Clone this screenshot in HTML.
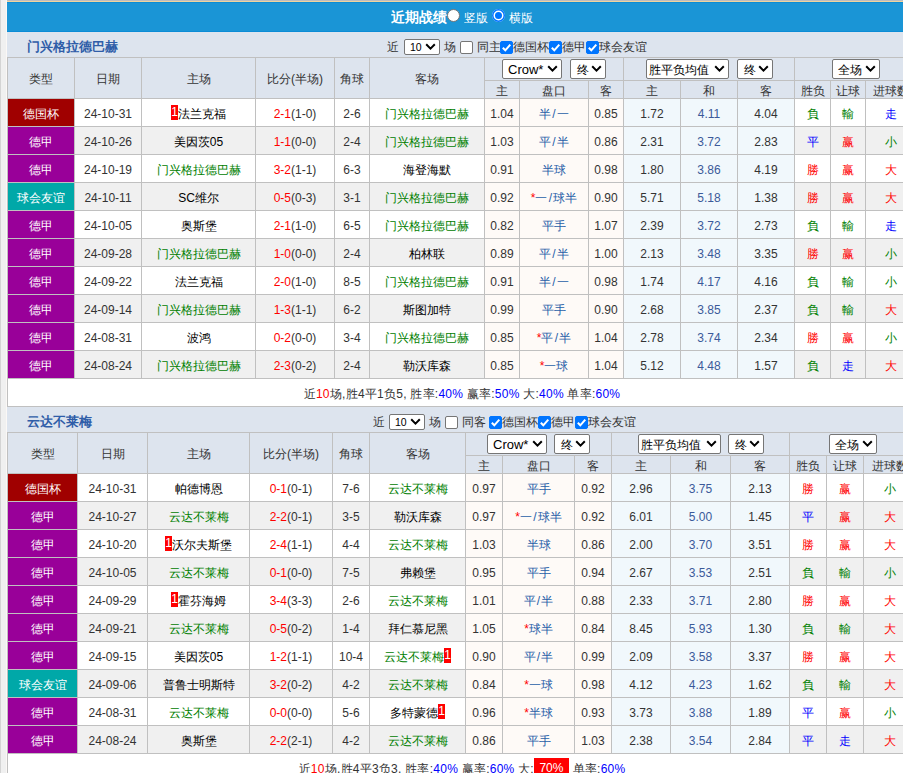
<!DOCTYPE html>
<html><head><meta charset="utf-8"><style>
html,body{margin:0;padding:0;}
body{width:903px;height:773px;overflow:hidden;position:relative;background:#f0f0f0;font-family:"Liberation Sans",sans-serif;font-size:12px;color:#333;font-weight:500;}
div{position:absolute;box-sizing:border-box;white-space:nowrap;overflow:hidden;}
.rc{background:#ff0000;color:#fff;font-weight:normal;display:inline-block;width:7px;height:15px;line-height:15px;vertical-align:-2px;text-align:center;overflow:hidden;}
.sel{background:#fff;border:1px solid #767676;border-radius:2px;color:#000;font-size:13px;padding-left:5px;}
.sel svg{position:absolute;right:3px;top:50%;margin-top:-4px;}
.s10{font-size:12px;padding-left:4px;}
.ctl{font-size:12px;color:#333;line-height:16px;overflow:visible;}
i{font-style:normal;margin:0 1.3px;}
.cb{width:13px;height:13px;border:1px solid #767676;border-radius:2px;background:#fff;}
.cb.on{background:#0075ff;border-color:#0075ff;}
.cb svg{position:absolute;left:-1px;top:-1px;}
</style></head><body>
<div style="left:0;top:0;width:1px;height:773px;background:#d4d4d4;"></div>
<div style="left:6px;top:0;width:1px;height:773px;background:#fbf8f6;"></div>
<div style="left:7px;top:0;width:900px;height:1px;background:#bcbcc0;"></div>
<div style="left:7px;top:1px;width:900px;height:1px;background:#efd49e;"></div>
<div style="left:7px;top:2px;width:930px;height:30px;background:#1a95d6;border-top:1px solid #0b8cd6;border-bottom:1px solid #0b8cd6;"></div>
<div style="left:391px;top:2px;width:60px;height:30px;line-height:30px;color:#fff;font-weight:bold;font-size:14px;">近期战绩</div>
<div class="rad" style="left:447px;top:9px;width:13px;height:13px;border-radius:50%;background:#fff;border:1px solid #767676;"></div>
<div style="left:464px;top:2px;width:30px;height:30px;line-height:32px;color:#fff;font-size:12px;">竖版</div>
<div class="rad" style="left:492px;top:9px;width:13px;height:13px;border-radius:50%;background:#0075ff;box-shadow:inset 0 0 0 1.5px #0075ff,inset 0 0 0 3px #fff;"></div>
<div style="left:509px;top:2px;width:30px;height:30px;line-height:32px;color:#fff;font-size:12px;">横版</div>
<div style="left:7px;top:32px;width:930px;height:25px;background:#dde4ee;"></div>
<div style="left:27px;top:32px;width:200px;height:25px;color:#2f5da8;font-weight:bold;font-size:13px;line-height:30px;">门兴格拉德巴赫</div>
<div class="ctl" style="left:387px;top:39px;">近</div>
<div class="sel" style="left:404px;top:39px;width:36px;height:16px;line-height:14px;font-size:10.5px;padding-left:5px;"><span>10</span><svg width="11" height="8" viewBox="0 0 11 8"><path d="M1.2 1.3 L5.5 5.6 L9.8 1.3" stroke="#000" stroke-width="2" fill="none"/></svg></div>
<div class="ctl" style="left:444px;top:39px;">场</div>
<div class="cb" style="left:460px;top:41px"></div>
<div class="ctl" style="left:477px;top:39px;">同主</div>
<div class="cb on" style="left:500px;top:41px"><svg width="13" height="13" viewBox="0 0 13 13"><path d="M2.8 6.8 L5.3 9.3 L10.3 3.6" stroke="#fff" stroke-width="2" fill="none"/></svg></div>
<div class="ctl" style="left:513px;top:39px;">德国杯</div>
<div class="cb on" style="left:549px;top:41px"><svg width="13" height="13" viewBox="0 0 13 13"><path d="M2.8 6.8 L5.3 9.3 L10.3 3.6" stroke="#fff" stroke-width="2" fill="none"/></svg></div>
<div class="ctl" style="left:562px;top:39px;">德甲</div>
<div class="cb on" style="left:586px;top:41px"><svg width="13" height="13" viewBox="0 0 13 13"><path d="M2.8 6.8 L5.3 9.3 L10.3 3.6" stroke="#fff" stroke-width="2" fill="none"/></svg></div>
<div class="ctl" style="left:599px;top:39px;">球会友谊</div>
<div style="left:8px;top:58px;width:66px;height:40px;background:#dde4ee;line-height:43px;text-align:center;color:#333;">类型</div>
<div style="left:75px;top:58px;width:66px;height:40px;background:#dde4ee;line-height:43px;text-align:center;color:#333;">日期</div>
<div style="left:142px;top:58px;width:113px;height:40px;background:#dde4ee;line-height:43px;text-align:center;color:#333;">主场</div>
<div style="left:256px;top:58px;width:78px;height:40px;background:#dde4ee;line-height:43px;text-align:center;color:#333;">比分(半场)</div>
<div style="left:335px;top:58px;width:34px;height:40px;background:#dde4ee;line-height:43px;text-align:center;color:#333;">角球</div>
<div style="left:370px;top:58px;width:114px;height:40px;background:#dde4ee;line-height:43px;text-align:center;color:#333;">客场</div>
<div style="left:485px;top:58px;width:138px;height:22px;background:#dde4ee;line-height:25px;"></div>
<div style="left:624px;top:58px;width:170px;height:22px;background:#dde4ee;line-height:25px;"></div>
<div style="left:795px;top:58px;width:120px;height:22px;background:#dde4ee;line-height:25px;"></div>
<div style="left:485px;top:81px;width:34px;height:17px;background:#dde4ee;line-height:20px;text-align:center;color:#333;">主</div>
<div style="left:520px;top:81px;width:68px;height:17px;background:#dde4ee;line-height:20px;text-align:center;color:#333;">盘口</div>
<div style="left:589px;top:81px;width:34px;height:17px;background:#dde4ee;line-height:20px;text-align:center;color:#333;">客</div>
<div style="left:624px;top:81px;width:56px;height:17px;background:#dde4ee;line-height:20px;text-align:center;color:#333;">主</div>
<div style="left:681px;top:81px;width:56px;height:17px;background:#dde4ee;line-height:20px;text-align:center;color:#333;">和</div>
<div style="left:738px;top:81px;width:56px;height:17px;background:#dde4ee;line-height:20px;text-align:center;color:#333;">客</div>
<div style="left:795px;top:81px;width:35px;height:17px;background:#dde4ee;line-height:20px;text-align:center;color:#333;">胜负</div>
<div style="left:831px;top:81px;width:34px;height:17px;background:#dde4ee;line-height:20px;text-align:center;color:#333;">让球</div>
<div style="left:866px;top:81px;width:49px;height:17px;background:#dde4ee;line-height:20px;text-align:center;color:#333;">进球数</div>
<div class="sel" style="left:502px;top:59px;width:60px;height:20px;line-height:20px;font-size:13px;padding-left:5px;"><span>Crow*</span><svg width="11" height="8" viewBox="0 0 11 8"><path d="M1.2 1.3 L5.5 5.6 L9.8 1.3" stroke="#000" stroke-width="2" fill="none"/></svg></div>
<div class="sel" style="left:570px;top:59px;width:36px;height:20px;line-height:20px;font-size:12px;padding-left:6px;"><span>终</span><svg width="11" height="8" viewBox="0 0 11 8"><path d="M1.2 1.3 L5.5 5.6 L9.8 1.3" stroke="#000" stroke-width="2" fill="none"/></svg></div>
<div class="sel" style="left:646px;top:59px;width:83px;height:20px;line-height:20px;font-size:12px;padding-left:2px;"><span>胜平负均值</span><svg width="11" height="8" viewBox="0 0 11 8"><path d="M1.2 1.3 L5.5 5.6 L9.8 1.3" stroke="#000" stroke-width="2" fill="none"/></svg></div>
<div class="sel" style="left:737px;top:59px;width:36px;height:20px;line-height:20px;font-size:12px;padding-left:6px;"><span>终</span><svg width="11" height="8" viewBox="0 0 11 8"><path d="M1.2 1.3 L5.5 5.6 L9.8 1.3" stroke="#000" stroke-width="2" fill="none"/></svg></div>
<div class="sel" style="left:832px;top:59px;width:48px;height:20px;line-height:20px;font-size:12px;padding-left:5px;"><span>全场</span><svg width="11" height="8" viewBox="0 0 11 8"><path d="M1.2 1.3 L5.5 5.6 L9.8 1.3" stroke="#000" stroke-width="2" fill="none"/></svg></div>
<div style="left:8px;top:99px;width:66px;height:27px;background:#a00000;line-height:30px;color:#fff;text-align:center;">德国杯</div>
<div style="left:75px;top:99px;width:66px;height:27px;background:#ffffff;line-height:30px;text-align:center;color:#333;">24-10-31</div>
<div style="left:142px;top:99px;width:113px;height:27px;background:#ffffff;line-height:30px;text-align:center;"><b class="rc">1</b><span style="color:#000">法兰克福</span></div>
<div style="left:256px;top:99px;width:78px;height:27px;background:#ffffff;line-height:30px;text-align:center;color:#333;"><span style="color:#ff0000">2-1</span>(1-0)</div>
<div style="left:335px;top:99px;width:34px;height:27px;background:#ffffff;line-height:30px;text-align:center;color:#333;">2-6</div>
<div style="left:370px;top:99px;width:114px;height:27px;background:#ffffff;line-height:30px;text-align:center;"><span style="color:#008000">门兴格拉德巴赫</span></div>
<div style="left:485px;top:99px;width:34px;height:27px;background:#fefaf7;line-height:30px;text-align:center;color:#333;">1.04</div>
<div style="left:520px;top:99px;width:68px;height:27px;background:#fefaf7;line-height:30px;text-align:center;color:#2860a8;">半<i>/</i>一</div>
<div style="left:589px;top:99px;width:34px;height:27px;background:#fefaf7;line-height:30px;text-align:center;color:#333;">0.85</div>
<div style="left:624px;top:99px;width:56px;height:27px;background:#f1f8fc;line-height:30px;text-align:center;color:#333;">1.72</div>
<div style="left:681px;top:99px;width:56px;height:27px;background:#f1f8fc;line-height:30px;text-align:center;color:#3b5a9a;">4.11</div>
<div style="left:738px;top:99px;width:56px;height:27px;background:#f1f8fc;line-height:30px;text-align:center;color:#333;">4.04</div>
<div style="left:795px;top:99px;width:35px;height:27px;background:#ffffff;line-height:30px;text-align:center;color:#008000;">負</div>
<div style="left:831px;top:99px;width:34px;height:27px;background:#ffffff;line-height:30px;text-align:center;color:#008000;">輸</div>
<div style="left:866px;top:99px;width:49px;height:27px;background:#ffffff;line-height:30px;text-align:center;color:#0000ff;">走</div>
<div style="left:8px;top:127px;width:66px;height:27px;background:#990099;line-height:30px;color:#fff;text-align:center;">德甲</div>
<div style="left:75px;top:127px;width:66px;height:27px;background:#f0f0f0;line-height:30px;text-align:center;color:#333;">24-10-26</div>
<div style="left:142px;top:127px;width:113px;height:27px;background:#f0f0f0;line-height:30px;text-align:center;"><span style="color:#000">美因茨05</span></div>
<div style="left:256px;top:127px;width:78px;height:27px;background:#f0f0f0;line-height:30px;text-align:center;color:#333;"><span style="color:#ff0000">1-1</span>(0-0)</div>
<div style="left:335px;top:127px;width:34px;height:27px;background:#f0f0f0;line-height:30px;text-align:center;color:#333;">2-4</div>
<div style="left:370px;top:127px;width:114px;height:27px;background:#f0f0f0;line-height:30px;text-align:center;"><span style="color:#008000">门兴格拉德巴赫</span></div>
<div style="left:485px;top:127px;width:34px;height:27px;background:#fefaf7;line-height:30px;text-align:center;color:#333;">1.03</div>
<div style="left:520px;top:127px;width:68px;height:27px;background:#fefaf7;line-height:30px;text-align:center;color:#2860a8;">平<i>/</i>半</div>
<div style="left:589px;top:127px;width:34px;height:27px;background:#fefaf7;line-height:30px;text-align:center;color:#333;">0.86</div>
<div style="left:624px;top:127px;width:56px;height:27px;background:#f1f8fc;line-height:30px;text-align:center;color:#333;">2.31</div>
<div style="left:681px;top:127px;width:56px;height:27px;background:#f1f8fc;line-height:30px;text-align:center;color:#3b5a9a;">3.72</div>
<div style="left:738px;top:127px;width:56px;height:27px;background:#f1f8fc;line-height:30px;text-align:center;color:#333;">2.83</div>
<div style="left:795px;top:127px;width:35px;height:27px;background:#f0f0f0;line-height:30px;text-align:center;color:#0000ff;">平</div>
<div style="left:831px;top:127px;width:34px;height:27px;background:#f0f0f0;line-height:30px;text-align:center;color:#ff0000;">赢</div>
<div style="left:866px;top:127px;width:49px;height:27px;background:#f0f0f0;line-height:30px;text-align:center;color:#008000;">小</div>
<div style="left:8px;top:155px;width:66px;height:27px;background:#990099;line-height:30px;color:#fff;text-align:center;">德甲</div>
<div style="left:75px;top:155px;width:66px;height:27px;background:#ffffff;line-height:30px;text-align:center;color:#333;">24-10-19</div>
<div style="left:142px;top:155px;width:113px;height:27px;background:#ffffff;line-height:30px;text-align:center;"><span style="color:#008000">门兴格拉德巴赫</span></div>
<div style="left:256px;top:155px;width:78px;height:27px;background:#ffffff;line-height:30px;text-align:center;color:#333;"><span style="color:#ff0000">3-2</span>(1-1)</div>
<div style="left:335px;top:155px;width:34px;height:27px;background:#ffffff;line-height:30px;text-align:center;color:#333;">6-3</div>
<div style="left:370px;top:155px;width:114px;height:27px;background:#ffffff;line-height:30px;text-align:center;"><span style="color:#000">海登海默</span></div>
<div style="left:485px;top:155px;width:34px;height:27px;background:#fefaf7;line-height:30px;text-align:center;color:#333;">0.91</div>
<div style="left:520px;top:155px;width:68px;height:27px;background:#fefaf7;line-height:30px;text-align:center;color:#2860a8;">半球</div>
<div style="left:589px;top:155px;width:34px;height:27px;background:#fefaf7;line-height:30px;text-align:center;color:#333;">0.98</div>
<div style="left:624px;top:155px;width:56px;height:27px;background:#f1f8fc;line-height:30px;text-align:center;color:#333;">1.80</div>
<div style="left:681px;top:155px;width:56px;height:27px;background:#f1f8fc;line-height:30px;text-align:center;color:#3b5a9a;">3.86</div>
<div style="left:738px;top:155px;width:56px;height:27px;background:#f1f8fc;line-height:30px;text-align:center;color:#333;">4.19</div>
<div style="left:795px;top:155px;width:35px;height:27px;background:#ffffff;line-height:30px;text-align:center;color:#ff0000;">勝</div>
<div style="left:831px;top:155px;width:34px;height:27px;background:#ffffff;line-height:30px;text-align:center;color:#ff0000;">赢</div>
<div style="left:866px;top:155px;width:49px;height:27px;background:#ffffff;line-height:30px;text-align:center;color:#ff0000;">大</div>
<div style="left:8px;top:183px;width:66px;height:27px;background:#00a8a8;line-height:30px;color:#fff;text-align:center;">球会友谊</div>
<div style="left:75px;top:183px;width:66px;height:27px;background:#f0f0f0;line-height:30px;text-align:center;color:#333;">24-10-11</div>
<div style="left:142px;top:183px;width:113px;height:27px;background:#f0f0f0;line-height:30px;text-align:center;"><span style="color:#000">SC维尔</span></div>
<div style="left:256px;top:183px;width:78px;height:27px;background:#f0f0f0;line-height:30px;text-align:center;color:#333;"><span style="color:#ff0000">0-5</span>(0-3)</div>
<div style="left:335px;top:183px;width:34px;height:27px;background:#f0f0f0;line-height:30px;text-align:center;color:#333;">3-1</div>
<div style="left:370px;top:183px;width:114px;height:27px;background:#f0f0f0;line-height:30px;text-align:center;"><span style="color:#008000">门兴格拉德巴赫</span></div>
<div style="left:485px;top:183px;width:34px;height:27px;background:#fefaf7;line-height:30px;text-align:center;color:#333;">0.92</div>
<div style="left:520px;top:183px;width:68px;height:27px;background:#fefaf7;line-height:30px;text-align:center;color:#2860a8;"><span style="color:#ff0000">*</span>一<i>/</i>球半</div>
<div style="left:589px;top:183px;width:34px;height:27px;background:#fefaf7;line-height:30px;text-align:center;color:#333;">0.90</div>
<div style="left:624px;top:183px;width:56px;height:27px;background:#f1f8fc;line-height:30px;text-align:center;color:#333;">5.71</div>
<div style="left:681px;top:183px;width:56px;height:27px;background:#f1f8fc;line-height:30px;text-align:center;color:#3b5a9a;">5.18</div>
<div style="left:738px;top:183px;width:56px;height:27px;background:#f1f8fc;line-height:30px;text-align:center;color:#333;">1.38</div>
<div style="left:795px;top:183px;width:35px;height:27px;background:#f0f0f0;line-height:30px;text-align:center;color:#ff0000;">勝</div>
<div style="left:831px;top:183px;width:34px;height:27px;background:#f0f0f0;line-height:30px;text-align:center;color:#ff0000;">赢</div>
<div style="left:866px;top:183px;width:49px;height:27px;background:#f0f0f0;line-height:30px;text-align:center;color:#ff0000;">大</div>
<div style="left:8px;top:211px;width:66px;height:27px;background:#990099;line-height:30px;color:#fff;text-align:center;">德甲</div>
<div style="left:75px;top:211px;width:66px;height:27px;background:#ffffff;line-height:30px;text-align:center;color:#333;">24-10-05</div>
<div style="left:142px;top:211px;width:113px;height:27px;background:#ffffff;line-height:30px;text-align:center;"><span style="color:#000">奥斯堡</span></div>
<div style="left:256px;top:211px;width:78px;height:27px;background:#ffffff;line-height:30px;text-align:center;color:#333;"><span style="color:#ff0000">2-1</span>(1-0)</div>
<div style="left:335px;top:211px;width:34px;height:27px;background:#ffffff;line-height:30px;text-align:center;color:#333;">6-5</div>
<div style="left:370px;top:211px;width:114px;height:27px;background:#ffffff;line-height:30px;text-align:center;"><span style="color:#008000">门兴格拉德巴赫</span></div>
<div style="left:485px;top:211px;width:34px;height:27px;background:#fefaf7;line-height:30px;text-align:center;color:#333;">0.82</div>
<div style="left:520px;top:211px;width:68px;height:27px;background:#fefaf7;line-height:30px;text-align:center;color:#2860a8;">平手</div>
<div style="left:589px;top:211px;width:34px;height:27px;background:#fefaf7;line-height:30px;text-align:center;color:#333;">1.07</div>
<div style="left:624px;top:211px;width:56px;height:27px;background:#f1f8fc;line-height:30px;text-align:center;color:#333;">2.39</div>
<div style="left:681px;top:211px;width:56px;height:27px;background:#f1f8fc;line-height:30px;text-align:center;color:#3b5a9a;">3.72</div>
<div style="left:738px;top:211px;width:56px;height:27px;background:#f1f8fc;line-height:30px;text-align:center;color:#333;">2.73</div>
<div style="left:795px;top:211px;width:35px;height:27px;background:#ffffff;line-height:30px;text-align:center;color:#008000;">負</div>
<div style="left:831px;top:211px;width:34px;height:27px;background:#ffffff;line-height:30px;text-align:center;color:#008000;">輸</div>
<div style="left:866px;top:211px;width:49px;height:27px;background:#ffffff;line-height:30px;text-align:center;color:#0000ff;">走</div>
<div style="left:8px;top:239px;width:66px;height:27px;background:#990099;line-height:30px;color:#fff;text-align:center;">德甲</div>
<div style="left:75px;top:239px;width:66px;height:27px;background:#f0f0f0;line-height:30px;text-align:center;color:#333;">24-09-28</div>
<div style="left:142px;top:239px;width:113px;height:27px;background:#f0f0f0;line-height:30px;text-align:center;"><span style="color:#008000">门兴格拉德巴赫</span></div>
<div style="left:256px;top:239px;width:78px;height:27px;background:#f0f0f0;line-height:30px;text-align:center;color:#333;"><span style="color:#ff0000">1-0</span>(0-0)</div>
<div style="left:335px;top:239px;width:34px;height:27px;background:#f0f0f0;line-height:30px;text-align:center;color:#333;">2-4</div>
<div style="left:370px;top:239px;width:114px;height:27px;background:#f0f0f0;line-height:30px;text-align:center;"><span style="color:#000">柏林联</span></div>
<div style="left:485px;top:239px;width:34px;height:27px;background:#fefaf7;line-height:30px;text-align:center;color:#333;">0.89</div>
<div style="left:520px;top:239px;width:68px;height:27px;background:#fefaf7;line-height:30px;text-align:center;color:#2860a8;">平<i>/</i>半</div>
<div style="left:589px;top:239px;width:34px;height:27px;background:#fefaf7;line-height:30px;text-align:center;color:#333;">1.00</div>
<div style="left:624px;top:239px;width:56px;height:27px;background:#f1f8fc;line-height:30px;text-align:center;color:#333;">2.13</div>
<div style="left:681px;top:239px;width:56px;height:27px;background:#f1f8fc;line-height:30px;text-align:center;color:#3b5a9a;">3.48</div>
<div style="left:738px;top:239px;width:56px;height:27px;background:#f1f8fc;line-height:30px;text-align:center;color:#333;">3.35</div>
<div style="left:795px;top:239px;width:35px;height:27px;background:#f0f0f0;line-height:30px;text-align:center;color:#ff0000;">勝</div>
<div style="left:831px;top:239px;width:34px;height:27px;background:#f0f0f0;line-height:30px;text-align:center;color:#ff0000;">赢</div>
<div style="left:866px;top:239px;width:49px;height:27px;background:#f0f0f0;line-height:30px;text-align:center;color:#008000;">小</div>
<div style="left:8px;top:267px;width:66px;height:27px;background:#990099;line-height:30px;color:#fff;text-align:center;">德甲</div>
<div style="left:75px;top:267px;width:66px;height:27px;background:#ffffff;line-height:30px;text-align:center;color:#333;">24-09-22</div>
<div style="left:142px;top:267px;width:113px;height:27px;background:#ffffff;line-height:30px;text-align:center;"><span style="color:#000">法兰克福</span></div>
<div style="left:256px;top:267px;width:78px;height:27px;background:#ffffff;line-height:30px;text-align:center;color:#333;"><span style="color:#ff0000">2-0</span>(1-0)</div>
<div style="left:335px;top:267px;width:34px;height:27px;background:#ffffff;line-height:30px;text-align:center;color:#333;">8-5</div>
<div style="left:370px;top:267px;width:114px;height:27px;background:#ffffff;line-height:30px;text-align:center;"><span style="color:#008000">门兴格拉德巴赫</span></div>
<div style="left:485px;top:267px;width:34px;height:27px;background:#fefaf7;line-height:30px;text-align:center;color:#333;">0.91</div>
<div style="left:520px;top:267px;width:68px;height:27px;background:#fefaf7;line-height:30px;text-align:center;color:#2860a8;">半<i>/</i>一</div>
<div style="left:589px;top:267px;width:34px;height:27px;background:#fefaf7;line-height:30px;text-align:center;color:#333;">0.98</div>
<div style="left:624px;top:267px;width:56px;height:27px;background:#f1f8fc;line-height:30px;text-align:center;color:#333;">1.74</div>
<div style="left:681px;top:267px;width:56px;height:27px;background:#f1f8fc;line-height:30px;text-align:center;color:#3b5a9a;">4.17</div>
<div style="left:738px;top:267px;width:56px;height:27px;background:#f1f8fc;line-height:30px;text-align:center;color:#333;">4.16</div>
<div style="left:795px;top:267px;width:35px;height:27px;background:#ffffff;line-height:30px;text-align:center;color:#008000;">負</div>
<div style="left:831px;top:267px;width:34px;height:27px;background:#ffffff;line-height:30px;text-align:center;color:#008000;">輸</div>
<div style="left:866px;top:267px;width:49px;height:27px;background:#ffffff;line-height:30px;text-align:center;color:#008000;">小</div>
<div style="left:8px;top:295px;width:66px;height:27px;background:#990099;line-height:30px;color:#fff;text-align:center;">德甲</div>
<div style="left:75px;top:295px;width:66px;height:27px;background:#f0f0f0;line-height:30px;text-align:center;color:#333;">24-09-14</div>
<div style="left:142px;top:295px;width:113px;height:27px;background:#f0f0f0;line-height:30px;text-align:center;"><span style="color:#008000">门兴格拉德巴赫</span></div>
<div style="left:256px;top:295px;width:78px;height:27px;background:#f0f0f0;line-height:30px;text-align:center;color:#333;"><span style="color:#ff0000">1-3</span>(1-1)</div>
<div style="left:335px;top:295px;width:34px;height:27px;background:#f0f0f0;line-height:30px;text-align:center;color:#333;">6-2</div>
<div style="left:370px;top:295px;width:114px;height:27px;background:#f0f0f0;line-height:30px;text-align:center;"><span style="color:#000">斯图加特</span></div>
<div style="left:485px;top:295px;width:34px;height:27px;background:#fefaf7;line-height:30px;text-align:center;color:#333;">0.99</div>
<div style="left:520px;top:295px;width:68px;height:27px;background:#fefaf7;line-height:30px;text-align:center;color:#2860a8;">平手</div>
<div style="left:589px;top:295px;width:34px;height:27px;background:#fefaf7;line-height:30px;text-align:center;color:#333;">0.90</div>
<div style="left:624px;top:295px;width:56px;height:27px;background:#f1f8fc;line-height:30px;text-align:center;color:#333;">2.68</div>
<div style="left:681px;top:295px;width:56px;height:27px;background:#f1f8fc;line-height:30px;text-align:center;color:#3b5a9a;">3.85</div>
<div style="left:738px;top:295px;width:56px;height:27px;background:#f1f8fc;line-height:30px;text-align:center;color:#333;">2.37</div>
<div style="left:795px;top:295px;width:35px;height:27px;background:#f0f0f0;line-height:30px;text-align:center;color:#008000;">負</div>
<div style="left:831px;top:295px;width:34px;height:27px;background:#f0f0f0;line-height:30px;text-align:center;color:#008000;">輸</div>
<div style="left:866px;top:295px;width:49px;height:27px;background:#f0f0f0;line-height:30px;text-align:center;color:#ff0000;">大</div>
<div style="left:8px;top:323px;width:66px;height:27px;background:#990099;line-height:30px;color:#fff;text-align:center;">德甲</div>
<div style="left:75px;top:323px;width:66px;height:27px;background:#ffffff;line-height:30px;text-align:center;color:#333;">24-08-31</div>
<div style="left:142px;top:323px;width:113px;height:27px;background:#ffffff;line-height:30px;text-align:center;"><span style="color:#000">波鸿</span></div>
<div style="left:256px;top:323px;width:78px;height:27px;background:#ffffff;line-height:30px;text-align:center;color:#333;"><span style="color:#ff0000">0-2</span>(0-0)</div>
<div style="left:335px;top:323px;width:34px;height:27px;background:#ffffff;line-height:30px;text-align:center;color:#333;">3-4</div>
<div style="left:370px;top:323px;width:114px;height:27px;background:#ffffff;line-height:30px;text-align:center;"><span style="color:#008000">门兴格拉德巴赫</span></div>
<div style="left:485px;top:323px;width:34px;height:27px;background:#fefaf7;line-height:30px;text-align:center;color:#333;">0.85</div>
<div style="left:520px;top:323px;width:68px;height:27px;background:#fefaf7;line-height:30px;text-align:center;color:#2860a8;"><span style="color:#ff0000">*</span>平<i>/</i>半</div>
<div style="left:589px;top:323px;width:34px;height:27px;background:#fefaf7;line-height:30px;text-align:center;color:#333;">1.04</div>
<div style="left:624px;top:323px;width:56px;height:27px;background:#f1f8fc;line-height:30px;text-align:center;color:#333;">2.78</div>
<div style="left:681px;top:323px;width:56px;height:27px;background:#f1f8fc;line-height:30px;text-align:center;color:#3b5a9a;">3.74</div>
<div style="left:738px;top:323px;width:56px;height:27px;background:#f1f8fc;line-height:30px;text-align:center;color:#333;">2.34</div>
<div style="left:795px;top:323px;width:35px;height:27px;background:#ffffff;line-height:30px;text-align:center;color:#ff0000;">勝</div>
<div style="left:831px;top:323px;width:34px;height:27px;background:#ffffff;line-height:30px;text-align:center;color:#ff0000;">赢</div>
<div style="left:866px;top:323px;width:49px;height:27px;background:#ffffff;line-height:30px;text-align:center;color:#008000;">小</div>
<div style="left:8px;top:351px;width:66px;height:27px;background:#990099;line-height:30px;color:#fff;text-align:center;">德甲</div>
<div style="left:75px;top:351px;width:66px;height:27px;background:#f0f0f0;line-height:30px;text-align:center;color:#333;">24-08-24</div>
<div style="left:142px;top:351px;width:113px;height:27px;background:#f0f0f0;line-height:30px;text-align:center;"><span style="color:#008000">门兴格拉德巴赫</span></div>
<div style="left:256px;top:351px;width:78px;height:27px;background:#f0f0f0;line-height:30px;text-align:center;color:#333;"><span style="color:#ff0000">2-3</span>(0-2)</div>
<div style="left:335px;top:351px;width:34px;height:27px;background:#f0f0f0;line-height:30px;text-align:center;color:#333;">2-4</div>
<div style="left:370px;top:351px;width:114px;height:27px;background:#f0f0f0;line-height:30px;text-align:center;"><span style="color:#000">勒沃库森</span></div>
<div style="left:485px;top:351px;width:34px;height:27px;background:#fefaf7;line-height:30px;text-align:center;color:#333;">0.85</div>
<div style="left:520px;top:351px;width:68px;height:27px;background:#fefaf7;line-height:30px;text-align:center;color:#2860a8;"><span style="color:#ff0000">*</span>一球</div>
<div style="left:589px;top:351px;width:34px;height:27px;background:#fefaf7;line-height:30px;text-align:center;color:#333;">1.04</div>
<div style="left:624px;top:351px;width:56px;height:27px;background:#f1f8fc;line-height:30px;text-align:center;color:#333;">5.12</div>
<div style="left:681px;top:351px;width:56px;height:27px;background:#f1f8fc;line-height:30px;text-align:center;color:#3b5a9a;">4.48</div>
<div style="left:738px;top:351px;width:56px;height:27px;background:#f1f8fc;line-height:30px;text-align:center;color:#333;">1.57</div>
<div style="left:795px;top:351px;width:35px;height:27px;background:#f0f0f0;line-height:30px;text-align:center;color:#008000;">負</div>
<div style="left:831px;top:351px;width:34px;height:27px;background:#f0f0f0;line-height:30px;text-align:center;color:#0000ff;">走</div>
<div style="left:866px;top:351px;width:49px;height:27px;background:#f0f0f0;line-height:30px;text-align:center;color:#ff0000;">大</div>
<div style="left:8px;top:379px;width:907px;height:27px;background:#ffffff;line-height:30px;"></div>
<div style="left:7px;top:379px;width:910px;height:27px;text-align:center;line-height:30px;color:#333;letter-spacing:0.25px;">近<span style="color:#ff0000">10</span>场,胜4平1负5, 胜率:<span style="color:#0000ff">40%</span> 赢率:<span style="color:#0000ff">50%</span> 大:<span style="color:#0000ff">40%</span> 单率:<span style="color:#0000ff">60%</span></div>
<div style="left:7px;top:57px;width:1px;height:322px;background:#c0c0c0;"></div>
<div style="left:74px;top:57px;width:1px;height:322px;background:#c0c0c0;"></div>
<div style="left:141px;top:57px;width:1px;height:322px;background:#c0c0c0;"></div>
<div style="left:255px;top:57px;width:1px;height:322px;background:#c0c0c0;"></div>
<div style="left:334px;top:57px;width:1px;height:322px;background:#c0c0c0;"></div>
<div style="left:369px;top:57px;width:1px;height:322px;background:#c0c0c0;"></div>
<div style="left:484px;top:57px;width:1px;height:322px;background:#c0c0c0;"></div>
<div style="left:519px;top:80px;width:1px;height:299px;background:#c0c0c0;"></div>
<div style="left:588px;top:80px;width:1px;height:299px;background:#c0c0c0;"></div>
<div style="left:623px;top:57px;width:1px;height:322px;background:#c0c0c0;"></div>
<div style="left:680px;top:80px;width:1px;height:299px;background:#c0c0c0;"></div>
<div style="left:737px;top:80px;width:1px;height:299px;background:#c0c0c0;"></div>
<div style="left:794px;top:57px;width:1px;height:322px;background:#c0c0c0;"></div>
<div style="left:830px;top:80px;width:1px;height:299px;background:#c0c0c0;"></div>
<div style="left:865px;top:80px;width:1px;height:299px;background:#c0c0c0;"></div>
<div style="left:915px;top:57px;width:1px;height:322px;background:#c0c0c0;"></div>
<div style="left:7px;top:378px;width:1px;height:29px;background:#c0c0c0;"></div>
<div style="left:7px;top:57px;width:930px;height:1px;background:#c0c0c0;"></div>
<div style="left:484px;top:80px;width:930px;height:1px;background:#c0c0c0;"></div>
<div style="left:7px;top:98px;width:930px;height:1px;background:#c0c0c0;"></div>
<div style="left:7px;top:126px;width:930px;height:1px;background:#c0c0c0;"></div>
<div style="left:7px;top:154px;width:930px;height:1px;background:#c0c0c0;"></div>
<div style="left:7px;top:182px;width:930px;height:1px;background:#c0c0c0;"></div>
<div style="left:7px;top:210px;width:930px;height:1px;background:#c0c0c0;"></div>
<div style="left:7px;top:238px;width:930px;height:1px;background:#c0c0c0;"></div>
<div style="left:7px;top:266px;width:930px;height:1px;background:#c0c0c0;"></div>
<div style="left:7px;top:294px;width:930px;height:1px;background:#c0c0c0;"></div>
<div style="left:7px;top:322px;width:930px;height:1px;background:#c0c0c0;"></div>
<div style="left:7px;top:350px;width:930px;height:1px;background:#c0c0c0;"></div>
<div style="left:7px;top:378px;width:930px;height:1px;background:#c0c0c0;"></div>
<div style="left:7px;top:406px;width:930px;height:1px;background:#c0c0c0;"></div>
<div style="left:7px;top:407px;width:930px;height:25px;background:#dde4ee;"></div>
<div style="left:27px;top:407px;width:200px;height:25px;color:#2f5da8;font-weight:bold;font-size:13px;line-height:30px;">云达不莱梅</div>
<div class="ctl" style="left:373px;top:414px;">近</div>
<div class="sel" style="left:389px;top:414px;width:36px;height:16px;line-height:14px;font-size:10.5px;padding-left:5px;"><span>10</span><svg width="11" height="8" viewBox="0 0 11 8"><path d="M1.2 1.3 L5.5 5.6 L9.8 1.3" stroke="#000" stroke-width="2" fill="none"/></svg></div>
<div class="ctl" style="left:429px;top:414px;">场</div>
<div class="cb" style="left:445px;top:416px"></div>
<div class="ctl" style="left:462px;top:414px;">同客</div>
<div class="cb on" style="left:489px;top:416px"><svg width="13" height="13" viewBox="0 0 13 13"><path d="M2.8 6.8 L5.3 9.3 L10.3 3.6" stroke="#fff" stroke-width="2" fill="none"/></svg></div>
<div class="ctl" style="left:502px;top:414px;">德国杯</div>
<div class="cb on" style="left:538px;top:416px"><svg width="13" height="13" viewBox="0 0 13 13"><path d="M2.8 6.8 L5.3 9.3 L10.3 3.6" stroke="#fff" stroke-width="2" fill="none"/></svg></div>
<div class="ctl" style="left:551px;top:414px;">德甲</div>
<div class="cb on" style="left:575px;top:416px"><svg width="13" height="13" viewBox="0 0 13 13"><path d="M2.8 6.8 L5.3 9.3 L10.3 3.6" stroke="#fff" stroke-width="2" fill="none"/></svg></div>
<div class="ctl" style="left:588px;top:414px;">球会友谊</div>
<div style="left:8px;top:433px;width:69px;height:40px;background:#dde4ee;line-height:43px;text-align:center;color:#333;">类型</div>
<div style="left:78px;top:433px;width:69px;height:40px;background:#dde4ee;line-height:43px;text-align:center;color:#333;">日期</div>
<div style="left:148px;top:433px;width:101px;height:40px;background:#dde4ee;line-height:43px;text-align:center;color:#333;">主场</div>
<div style="left:250px;top:433px;width:82px;height:40px;background:#dde4ee;line-height:43px;text-align:center;color:#333;">比分(半场)</div>
<div style="left:333px;top:433px;width:36px;height:40px;background:#dde4ee;line-height:43px;text-align:center;color:#333;">角球</div>
<div style="left:370px;top:433px;width:95px;height:40px;background:#dde4ee;line-height:43px;text-align:center;color:#333;">客场</div>
<div style="left:466px;top:433px;width:145px;height:22px;background:#dde4ee;line-height:25px;"></div>
<div style="left:612px;top:433px;width:177px;height:22px;background:#dde4ee;line-height:25px;"></div>
<div style="left:790px;top:433px;width:126px;height:22px;background:#dde4ee;line-height:25px;"></div>
<div style="left:466px;top:456px;width:36px;height:17px;background:#dde4ee;line-height:20px;text-align:center;color:#333;">主</div>
<div style="left:503px;top:456px;width:71px;height:17px;background:#dde4ee;line-height:20px;text-align:center;color:#333;">盘口</div>
<div style="left:575px;top:456px;width:36px;height:17px;background:#dde4ee;line-height:20px;text-align:center;color:#333;">客</div>
<div style="left:612px;top:456px;width:58px;height:17px;background:#dde4ee;line-height:20px;text-align:center;color:#333;">主</div>
<div style="left:671px;top:456px;width:59px;height:17px;background:#dde4ee;line-height:20px;text-align:center;color:#333;">和</div>
<div style="left:731px;top:456px;width:58px;height:17px;background:#dde4ee;line-height:20px;text-align:center;color:#333;">客</div>
<div style="left:790px;top:456px;width:36px;height:17px;background:#dde4ee;line-height:20px;text-align:center;color:#333;">胜负</div>
<div style="left:827px;top:456px;width:36px;height:17px;background:#dde4ee;line-height:20px;text-align:center;color:#333;">让球</div>
<div style="left:864px;top:456px;width:52px;height:17px;background:#dde4ee;line-height:20px;text-align:center;color:#333;">进球数</div>
<div class="sel" style="left:487px;top:434px;width:60px;height:20px;line-height:20px;font-size:13px;padding-left:5px;"><span>Crow*</span><svg width="11" height="8" viewBox="0 0 11 8"><path d="M1.2 1.3 L5.5 5.6 L9.8 1.3" stroke="#000" stroke-width="2" fill="none"/></svg></div>
<div class="sel" style="left:554px;top:434px;width:36px;height:20px;line-height:20px;font-size:12px;padding-left:6px;"><span>终</span><svg width="11" height="8" viewBox="0 0 11 8"><path d="M1.2 1.3 L5.5 5.6 L9.8 1.3" stroke="#000" stroke-width="2" fill="none"/></svg></div>
<div class="sel" style="left:638px;top:434px;width:83px;height:20px;line-height:20px;font-size:12px;padding-left:2px;"><span>胜平负均值</span><svg width="11" height="8" viewBox="0 0 11 8"><path d="M1.2 1.3 L5.5 5.6 L9.8 1.3" stroke="#000" stroke-width="2" fill="none"/></svg></div>
<div class="sel" style="left:728px;top:434px;width:36px;height:20px;line-height:20px;font-size:12px;padding-left:6px;"><span>终</span><svg width="11" height="8" viewBox="0 0 11 8"><path d="M1.2 1.3 L5.5 5.6 L9.8 1.3" stroke="#000" stroke-width="2" fill="none"/></svg></div>
<div class="sel" style="left:829px;top:434px;width:48px;height:20px;line-height:20px;font-size:12px;padding-left:5px;"><span>全场</span><svg width="11" height="8" viewBox="0 0 11 8"><path d="M1.2 1.3 L5.5 5.6 L9.8 1.3" stroke="#000" stroke-width="2" fill="none"/></svg></div>
<div style="left:8px;top:474px;width:69px;height:27px;background:#a00000;line-height:30px;color:#fff;text-align:center;">德国杯</div>
<div style="left:78px;top:474px;width:69px;height:27px;background:#ffffff;line-height:30px;text-align:center;color:#333;">24-10-31</div>
<div style="left:148px;top:474px;width:101px;height:27px;background:#ffffff;line-height:30px;text-align:center;"><span style="color:#000">帕德博恩</span></div>
<div style="left:250px;top:474px;width:82px;height:27px;background:#ffffff;line-height:30px;text-align:center;color:#333;"><span style="color:#ff0000">0-1</span>(0-1)</div>
<div style="left:333px;top:474px;width:36px;height:27px;background:#ffffff;line-height:30px;text-align:center;color:#333;">7-6</div>
<div style="left:370px;top:474px;width:95px;height:27px;background:#ffffff;line-height:30px;text-align:center;"><span style="color:#008000">云达不莱梅</span></div>
<div style="left:466px;top:474px;width:36px;height:27px;background:#fefaf7;line-height:30px;text-align:center;color:#333;">0.97</div>
<div style="left:503px;top:474px;width:71px;height:27px;background:#fefaf7;line-height:30px;text-align:center;color:#2860a8;">平手</div>
<div style="left:575px;top:474px;width:36px;height:27px;background:#fefaf7;line-height:30px;text-align:center;color:#333;">0.92</div>
<div style="left:612px;top:474px;width:58px;height:27px;background:#f1f8fc;line-height:30px;text-align:center;color:#333;">2.96</div>
<div style="left:671px;top:474px;width:59px;height:27px;background:#f1f8fc;line-height:30px;text-align:center;color:#3b5a9a;">3.75</div>
<div style="left:731px;top:474px;width:58px;height:27px;background:#f1f8fc;line-height:30px;text-align:center;color:#333;">2.13</div>
<div style="left:790px;top:474px;width:36px;height:27px;background:#ffffff;line-height:30px;text-align:center;color:#ff0000;">勝</div>
<div style="left:827px;top:474px;width:36px;height:27px;background:#ffffff;line-height:30px;text-align:center;color:#ff0000;">赢</div>
<div style="left:864px;top:474px;width:52px;height:27px;background:#ffffff;line-height:30px;text-align:center;color:#008000;">小</div>
<div style="left:8px;top:502px;width:69px;height:27px;background:#990099;line-height:30px;color:#fff;text-align:center;">德甲</div>
<div style="left:78px;top:502px;width:69px;height:27px;background:#f0f0f0;line-height:30px;text-align:center;color:#333;">24-10-27</div>
<div style="left:148px;top:502px;width:101px;height:27px;background:#f0f0f0;line-height:30px;text-align:center;"><span style="color:#008000">云达不莱梅</span></div>
<div style="left:250px;top:502px;width:82px;height:27px;background:#f0f0f0;line-height:30px;text-align:center;color:#333;"><span style="color:#ff0000">2-2</span>(0-1)</div>
<div style="left:333px;top:502px;width:36px;height:27px;background:#f0f0f0;line-height:30px;text-align:center;color:#333;">3-5</div>
<div style="left:370px;top:502px;width:95px;height:27px;background:#f0f0f0;line-height:30px;text-align:center;"><span style="color:#000">勒沃库森</span></div>
<div style="left:466px;top:502px;width:36px;height:27px;background:#fefaf7;line-height:30px;text-align:center;color:#333;">0.97</div>
<div style="left:503px;top:502px;width:71px;height:27px;background:#fefaf7;line-height:30px;text-align:center;color:#2860a8;"><span style="color:#ff0000">*</span>一<i>/</i>球半</div>
<div style="left:575px;top:502px;width:36px;height:27px;background:#fefaf7;line-height:30px;text-align:center;color:#333;">0.92</div>
<div style="left:612px;top:502px;width:58px;height:27px;background:#f1f8fc;line-height:30px;text-align:center;color:#333;">6.01</div>
<div style="left:671px;top:502px;width:59px;height:27px;background:#f1f8fc;line-height:30px;text-align:center;color:#3b5a9a;">5.00</div>
<div style="left:731px;top:502px;width:58px;height:27px;background:#f1f8fc;line-height:30px;text-align:center;color:#333;">1.45</div>
<div style="left:790px;top:502px;width:36px;height:27px;background:#f0f0f0;line-height:30px;text-align:center;color:#0000ff;">平</div>
<div style="left:827px;top:502px;width:36px;height:27px;background:#f0f0f0;line-height:30px;text-align:center;color:#ff0000;">赢</div>
<div style="left:864px;top:502px;width:52px;height:27px;background:#f0f0f0;line-height:30px;text-align:center;color:#ff0000;">大</div>
<div style="left:8px;top:530px;width:69px;height:27px;background:#990099;line-height:30px;color:#fff;text-align:center;">德甲</div>
<div style="left:78px;top:530px;width:69px;height:27px;background:#ffffff;line-height:30px;text-align:center;color:#333;">24-10-20</div>
<div style="left:148px;top:530px;width:101px;height:27px;background:#ffffff;line-height:30px;text-align:center;"><b class="rc">1</b><span style="color:#000">沃尔夫斯堡</span></div>
<div style="left:250px;top:530px;width:82px;height:27px;background:#ffffff;line-height:30px;text-align:center;color:#333;"><span style="color:#ff0000">2-4</span>(1-1)</div>
<div style="left:333px;top:530px;width:36px;height:27px;background:#ffffff;line-height:30px;text-align:center;color:#333;">4-4</div>
<div style="left:370px;top:530px;width:95px;height:27px;background:#ffffff;line-height:30px;text-align:center;"><span style="color:#008000">云达不莱梅</span></div>
<div style="left:466px;top:530px;width:36px;height:27px;background:#fefaf7;line-height:30px;text-align:center;color:#333;">1.03</div>
<div style="left:503px;top:530px;width:71px;height:27px;background:#fefaf7;line-height:30px;text-align:center;color:#2860a8;">半球</div>
<div style="left:575px;top:530px;width:36px;height:27px;background:#fefaf7;line-height:30px;text-align:center;color:#333;">0.86</div>
<div style="left:612px;top:530px;width:58px;height:27px;background:#f1f8fc;line-height:30px;text-align:center;color:#333;">2.00</div>
<div style="left:671px;top:530px;width:59px;height:27px;background:#f1f8fc;line-height:30px;text-align:center;color:#3b5a9a;">3.70</div>
<div style="left:731px;top:530px;width:58px;height:27px;background:#f1f8fc;line-height:30px;text-align:center;color:#333;">3.51</div>
<div style="left:790px;top:530px;width:36px;height:27px;background:#ffffff;line-height:30px;text-align:center;color:#ff0000;">勝</div>
<div style="left:827px;top:530px;width:36px;height:27px;background:#ffffff;line-height:30px;text-align:center;color:#ff0000;">赢</div>
<div style="left:864px;top:530px;width:52px;height:27px;background:#ffffff;line-height:30px;text-align:center;color:#ff0000;">大</div>
<div style="left:8px;top:558px;width:69px;height:27px;background:#990099;line-height:30px;color:#fff;text-align:center;">德甲</div>
<div style="left:78px;top:558px;width:69px;height:27px;background:#f0f0f0;line-height:30px;text-align:center;color:#333;">24-10-05</div>
<div style="left:148px;top:558px;width:101px;height:27px;background:#f0f0f0;line-height:30px;text-align:center;"><span style="color:#008000">云达不莱梅</span></div>
<div style="left:250px;top:558px;width:82px;height:27px;background:#f0f0f0;line-height:30px;text-align:center;color:#333;"><span style="color:#ff0000">0-1</span>(0-0)</div>
<div style="left:333px;top:558px;width:36px;height:27px;background:#f0f0f0;line-height:30px;text-align:center;color:#333;">7-5</div>
<div style="left:370px;top:558px;width:95px;height:27px;background:#f0f0f0;line-height:30px;text-align:center;"><span style="color:#000">弗赖堡</span></div>
<div style="left:466px;top:558px;width:36px;height:27px;background:#fefaf7;line-height:30px;text-align:center;color:#333;">0.95</div>
<div style="left:503px;top:558px;width:71px;height:27px;background:#fefaf7;line-height:30px;text-align:center;color:#2860a8;">平手</div>
<div style="left:575px;top:558px;width:36px;height:27px;background:#fefaf7;line-height:30px;text-align:center;color:#333;">0.94</div>
<div style="left:612px;top:558px;width:58px;height:27px;background:#f1f8fc;line-height:30px;text-align:center;color:#333;">2.67</div>
<div style="left:671px;top:558px;width:59px;height:27px;background:#f1f8fc;line-height:30px;text-align:center;color:#3b5a9a;">3.53</div>
<div style="left:731px;top:558px;width:58px;height:27px;background:#f1f8fc;line-height:30px;text-align:center;color:#333;">2.51</div>
<div style="left:790px;top:558px;width:36px;height:27px;background:#f0f0f0;line-height:30px;text-align:center;color:#008000;">負</div>
<div style="left:827px;top:558px;width:36px;height:27px;background:#f0f0f0;line-height:30px;text-align:center;color:#008000;">輸</div>
<div style="left:864px;top:558px;width:52px;height:27px;background:#f0f0f0;line-height:30px;text-align:center;color:#008000;">小</div>
<div style="left:8px;top:586px;width:69px;height:27px;background:#990099;line-height:30px;color:#fff;text-align:center;">德甲</div>
<div style="left:78px;top:586px;width:69px;height:27px;background:#ffffff;line-height:30px;text-align:center;color:#333;">24-09-29</div>
<div style="left:148px;top:586px;width:101px;height:27px;background:#ffffff;line-height:30px;text-align:center;"><b class="rc">1</b><span style="color:#000">霍芬海姆</span></div>
<div style="left:250px;top:586px;width:82px;height:27px;background:#ffffff;line-height:30px;text-align:center;color:#333;"><span style="color:#ff0000">3-4</span>(3-3)</div>
<div style="left:333px;top:586px;width:36px;height:27px;background:#ffffff;line-height:30px;text-align:center;color:#333;">2-6</div>
<div style="left:370px;top:586px;width:95px;height:27px;background:#ffffff;line-height:30px;text-align:center;"><span style="color:#008000">云达不莱梅</span></div>
<div style="left:466px;top:586px;width:36px;height:27px;background:#fefaf7;line-height:30px;text-align:center;color:#333;">1.01</div>
<div style="left:503px;top:586px;width:71px;height:27px;background:#fefaf7;line-height:30px;text-align:center;color:#2860a8;">平<i>/</i>半</div>
<div style="left:575px;top:586px;width:36px;height:27px;background:#fefaf7;line-height:30px;text-align:center;color:#333;">0.88</div>
<div style="left:612px;top:586px;width:58px;height:27px;background:#f1f8fc;line-height:30px;text-align:center;color:#333;">2.33</div>
<div style="left:671px;top:586px;width:59px;height:27px;background:#f1f8fc;line-height:30px;text-align:center;color:#3b5a9a;">3.71</div>
<div style="left:731px;top:586px;width:58px;height:27px;background:#f1f8fc;line-height:30px;text-align:center;color:#333;">2.80</div>
<div style="left:790px;top:586px;width:36px;height:27px;background:#ffffff;line-height:30px;text-align:center;color:#ff0000;">勝</div>
<div style="left:827px;top:586px;width:36px;height:27px;background:#ffffff;line-height:30px;text-align:center;color:#ff0000;">赢</div>
<div style="left:864px;top:586px;width:52px;height:27px;background:#ffffff;line-height:30px;text-align:center;color:#ff0000;">大</div>
<div style="left:8px;top:614px;width:69px;height:27px;background:#990099;line-height:30px;color:#fff;text-align:center;">德甲</div>
<div style="left:78px;top:614px;width:69px;height:27px;background:#f0f0f0;line-height:30px;text-align:center;color:#333;">24-09-21</div>
<div style="left:148px;top:614px;width:101px;height:27px;background:#f0f0f0;line-height:30px;text-align:center;"><span style="color:#008000">云达不莱梅</span></div>
<div style="left:250px;top:614px;width:82px;height:27px;background:#f0f0f0;line-height:30px;text-align:center;color:#333;"><span style="color:#ff0000">0-5</span>(0-2)</div>
<div style="left:333px;top:614px;width:36px;height:27px;background:#f0f0f0;line-height:30px;text-align:center;color:#333;">1-4</div>
<div style="left:370px;top:614px;width:95px;height:27px;background:#f0f0f0;line-height:30px;text-align:center;"><span style="color:#000">拜仁慕尼黑</span></div>
<div style="left:466px;top:614px;width:36px;height:27px;background:#fefaf7;line-height:30px;text-align:center;color:#333;">1.05</div>
<div style="left:503px;top:614px;width:71px;height:27px;background:#fefaf7;line-height:30px;text-align:center;color:#2860a8;"><span style="color:#ff0000">*</span>球半</div>
<div style="left:575px;top:614px;width:36px;height:27px;background:#fefaf7;line-height:30px;text-align:center;color:#333;">0.84</div>
<div style="left:612px;top:614px;width:58px;height:27px;background:#f1f8fc;line-height:30px;text-align:center;color:#333;">8.45</div>
<div style="left:671px;top:614px;width:59px;height:27px;background:#f1f8fc;line-height:30px;text-align:center;color:#3b5a9a;">5.93</div>
<div style="left:731px;top:614px;width:58px;height:27px;background:#f1f8fc;line-height:30px;text-align:center;color:#333;">1.30</div>
<div style="left:790px;top:614px;width:36px;height:27px;background:#f0f0f0;line-height:30px;text-align:center;color:#008000;">負</div>
<div style="left:827px;top:614px;width:36px;height:27px;background:#f0f0f0;line-height:30px;text-align:center;color:#008000;">輸</div>
<div style="left:864px;top:614px;width:52px;height:27px;background:#f0f0f0;line-height:30px;text-align:center;color:#ff0000;">大</div>
<div style="left:8px;top:642px;width:69px;height:27px;background:#990099;line-height:30px;color:#fff;text-align:center;">德甲</div>
<div style="left:78px;top:642px;width:69px;height:27px;background:#ffffff;line-height:30px;text-align:center;color:#333;">24-09-15</div>
<div style="left:148px;top:642px;width:101px;height:27px;background:#ffffff;line-height:30px;text-align:center;"><span style="color:#000">美因茨05</span></div>
<div style="left:250px;top:642px;width:82px;height:27px;background:#ffffff;line-height:30px;text-align:center;color:#333;"><span style="color:#ff0000">1-2</span>(1-1)</div>
<div style="left:333px;top:642px;width:36px;height:27px;background:#ffffff;line-height:30px;text-align:center;color:#333;">10-4</div>
<div style="left:370px;top:642px;width:95px;height:27px;background:#ffffff;line-height:30px;text-align:center;"><span style="color:#008000">云达不莱梅</span><b class="rc">1</b></div>
<div style="left:466px;top:642px;width:36px;height:27px;background:#fefaf7;line-height:30px;text-align:center;color:#333;">0.90</div>
<div style="left:503px;top:642px;width:71px;height:27px;background:#fefaf7;line-height:30px;text-align:center;color:#2860a8;">平<i>/</i>半</div>
<div style="left:575px;top:642px;width:36px;height:27px;background:#fefaf7;line-height:30px;text-align:center;color:#333;">0.99</div>
<div style="left:612px;top:642px;width:58px;height:27px;background:#f1f8fc;line-height:30px;text-align:center;color:#333;">2.09</div>
<div style="left:671px;top:642px;width:59px;height:27px;background:#f1f8fc;line-height:30px;text-align:center;color:#3b5a9a;">3.58</div>
<div style="left:731px;top:642px;width:58px;height:27px;background:#f1f8fc;line-height:30px;text-align:center;color:#333;">3.37</div>
<div style="left:790px;top:642px;width:36px;height:27px;background:#ffffff;line-height:30px;text-align:center;color:#ff0000;">勝</div>
<div style="left:827px;top:642px;width:36px;height:27px;background:#ffffff;line-height:30px;text-align:center;color:#ff0000;">赢</div>
<div style="left:864px;top:642px;width:52px;height:27px;background:#ffffff;line-height:30px;text-align:center;color:#ff0000;">大</div>
<div style="left:8px;top:670px;width:69px;height:27px;background:#00a8a8;line-height:30px;color:#fff;text-align:center;">球会友谊</div>
<div style="left:78px;top:670px;width:69px;height:27px;background:#f0f0f0;line-height:30px;text-align:center;color:#333;">24-09-06</div>
<div style="left:148px;top:670px;width:101px;height:27px;background:#f0f0f0;line-height:30px;text-align:center;"><span style="color:#000">普鲁士明斯特</span></div>
<div style="left:250px;top:670px;width:82px;height:27px;background:#f0f0f0;line-height:30px;text-align:center;color:#333;"><span style="color:#ff0000">3-2</span>(0-2)</div>
<div style="left:333px;top:670px;width:36px;height:27px;background:#f0f0f0;line-height:30px;text-align:center;color:#333;">4-2</div>
<div style="left:370px;top:670px;width:95px;height:27px;background:#f0f0f0;line-height:30px;text-align:center;"><span style="color:#008000">云达不莱梅</span></div>
<div style="left:466px;top:670px;width:36px;height:27px;background:#fefaf7;line-height:30px;text-align:center;color:#333;">0.84</div>
<div style="left:503px;top:670px;width:71px;height:27px;background:#fefaf7;line-height:30px;text-align:center;color:#2860a8;"><span style="color:#ff0000">*</span>一球</div>
<div style="left:575px;top:670px;width:36px;height:27px;background:#fefaf7;line-height:30px;text-align:center;color:#333;">0.98</div>
<div style="left:612px;top:670px;width:58px;height:27px;background:#f1f8fc;line-height:30px;text-align:center;color:#333;">4.12</div>
<div style="left:671px;top:670px;width:59px;height:27px;background:#f1f8fc;line-height:30px;text-align:center;color:#3b5a9a;">4.23</div>
<div style="left:731px;top:670px;width:58px;height:27px;background:#f1f8fc;line-height:30px;text-align:center;color:#333;">1.62</div>
<div style="left:790px;top:670px;width:36px;height:27px;background:#f0f0f0;line-height:30px;text-align:center;color:#008000;">負</div>
<div style="left:827px;top:670px;width:36px;height:27px;background:#f0f0f0;line-height:30px;text-align:center;color:#008000;">輸</div>
<div style="left:864px;top:670px;width:52px;height:27px;background:#f0f0f0;line-height:30px;text-align:center;color:#ff0000;">大</div>
<div style="left:8px;top:698px;width:69px;height:27px;background:#990099;line-height:30px;color:#fff;text-align:center;">德甲</div>
<div style="left:78px;top:698px;width:69px;height:27px;background:#ffffff;line-height:30px;text-align:center;color:#333;">24-08-31</div>
<div style="left:148px;top:698px;width:101px;height:27px;background:#ffffff;line-height:30px;text-align:center;"><span style="color:#008000">云达不莱梅</span></div>
<div style="left:250px;top:698px;width:82px;height:27px;background:#ffffff;line-height:30px;text-align:center;color:#333;"><span style="color:#ff0000">0-0</span>(0-0)</div>
<div style="left:333px;top:698px;width:36px;height:27px;background:#ffffff;line-height:30px;text-align:center;color:#333;">5-6</div>
<div style="left:370px;top:698px;width:95px;height:27px;background:#ffffff;line-height:30px;text-align:center;"><span style="color:#000">多特蒙德</span><b class="rc">1</b></div>
<div style="left:466px;top:698px;width:36px;height:27px;background:#fefaf7;line-height:30px;text-align:center;color:#333;">0.96</div>
<div style="left:503px;top:698px;width:71px;height:27px;background:#fefaf7;line-height:30px;text-align:center;color:#2860a8;"><span style="color:#ff0000">*</span>半球</div>
<div style="left:575px;top:698px;width:36px;height:27px;background:#fefaf7;line-height:30px;text-align:center;color:#333;">0.93</div>
<div style="left:612px;top:698px;width:58px;height:27px;background:#f1f8fc;line-height:30px;text-align:center;color:#333;">3.73</div>
<div style="left:671px;top:698px;width:59px;height:27px;background:#f1f8fc;line-height:30px;text-align:center;color:#3b5a9a;">3.88</div>
<div style="left:731px;top:698px;width:58px;height:27px;background:#f1f8fc;line-height:30px;text-align:center;color:#333;">1.89</div>
<div style="left:790px;top:698px;width:36px;height:27px;background:#ffffff;line-height:30px;text-align:center;color:#0000ff;">平</div>
<div style="left:827px;top:698px;width:36px;height:27px;background:#ffffff;line-height:30px;text-align:center;color:#ff0000;">赢</div>
<div style="left:864px;top:698px;width:52px;height:27px;background:#ffffff;line-height:30px;text-align:center;color:#008000;">小</div>
<div style="left:8px;top:726px;width:69px;height:27px;background:#990099;line-height:30px;color:#fff;text-align:center;">德甲</div>
<div style="left:78px;top:726px;width:69px;height:27px;background:#f0f0f0;line-height:30px;text-align:center;color:#333;">24-08-24</div>
<div style="left:148px;top:726px;width:101px;height:27px;background:#f0f0f0;line-height:30px;text-align:center;"><span style="color:#000">奥斯堡</span></div>
<div style="left:250px;top:726px;width:82px;height:27px;background:#f0f0f0;line-height:30px;text-align:center;color:#333;"><span style="color:#ff0000">2-2</span>(2-1)</div>
<div style="left:333px;top:726px;width:36px;height:27px;background:#f0f0f0;line-height:30px;text-align:center;color:#333;">4-2</div>
<div style="left:370px;top:726px;width:95px;height:27px;background:#f0f0f0;line-height:30px;text-align:center;"><span style="color:#008000">云达不莱梅</span></div>
<div style="left:466px;top:726px;width:36px;height:27px;background:#fefaf7;line-height:30px;text-align:center;color:#333;">0.86</div>
<div style="left:503px;top:726px;width:71px;height:27px;background:#fefaf7;line-height:30px;text-align:center;color:#2860a8;">平手</div>
<div style="left:575px;top:726px;width:36px;height:27px;background:#fefaf7;line-height:30px;text-align:center;color:#333;">1.03</div>
<div style="left:612px;top:726px;width:58px;height:27px;background:#f1f8fc;line-height:30px;text-align:center;color:#333;">2.38</div>
<div style="left:671px;top:726px;width:59px;height:27px;background:#f1f8fc;line-height:30px;text-align:center;color:#3b5a9a;">3.54</div>
<div style="left:731px;top:726px;width:58px;height:27px;background:#f1f8fc;line-height:30px;text-align:center;color:#333;">2.84</div>
<div style="left:790px;top:726px;width:36px;height:27px;background:#f0f0f0;line-height:30px;text-align:center;color:#0000ff;">平</div>
<div style="left:827px;top:726px;width:36px;height:27px;background:#f0f0f0;line-height:30px;text-align:center;color:#0000ff;">走</div>
<div style="left:864px;top:726px;width:52px;height:27px;background:#f0f0f0;line-height:30px;text-align:center;color:#ff0000;">大</div>
<div style="left:8px;top:754px;width:908px;height:27px;background:#ffffff;line-height:30px;"></div>
<div style="left:7px;top:754px;width:910px;height:27px;text-align:center;line-height:30px;color:#333;letter-spacing:0.25px;">近<span style="color:#ff0000">10</span>场,胜4平3负3, 胜率:<span style="color:#0000ff">40%</span> 赢率:<span style="color:#0000ff">60%</span> 大:<span style="background:#ff0000;color:#fff;display:inline-block;padding:0 5.5px;height:20px;line-height:20px;vertical-align:1px;letter-spacing:0;">70%</span> 单率:<span style="color:#0000ff">60%</span></div>
<div style="left:7px;top:432px;width:1px;height:322px;background:#c0c0c0;"></div>
<div style="left:77px;top:432px;width:1px;height:322px;background:#c0c0c0;"></div>
<div style="left:147px;top:432px;width:1px;height:322px;background:#c0c0c0;"></div>
<div style="left:249px;top:432px;width:1px;height:322px;background:#c0c0c0;"></div>
<div style="left:332px;top:432px;width:1px;height:322px;background:#c0c0c0;"></div>
<div style="left:369px;top:432px;width:1px;height:322px;background:#c0c0c0;"></div>
<div style="left:465px;top:432px;width:1px;height:322px;background:#c0c0c0;"></div>
<div style="left:502px;top:455px;width:1px;height:299px;background:#c0c0c0;"></div>
<div style="left:574px;top:455px;width:1px;height:299px;background:#c0c0c0;"></div>
<div style="left:611px;top:432px;width:1px;height:322px;background:#c0c0c0;"></div>
<div style="left:670px;top:455px;width:1px;height:299px;background:#c0c0c0;"></div>
<div style="left:730px;top:455px;width:1px;height:299px;background:#c0c0c0;"></div>
<div style="left:789px;top:432px;width:1px;height:322px;background:#c0c0c0;"></div>
<div style="left:826px;top:455px;width:1px;height:299px;background:#c0c0c0;"></div>
<div style="left:863px;top:455px;width:1px;height:299px;background:#c0c0c0;"></div>
<div style="left:916px;top:432px;width:1px;height:322px;background:#c0c0c0;"></div>
<div style="left:7px;top:753px;width:1px;height:29px;background:#c0c0c0;"></div>
<div style="left:7px;top:432px;width:930px;height:1px;background:#c0c0c0;"></div>
<div style="left:465px;top:455px;width:930px;height:1px;background:#c0c0c0;"></div>
<div style="left:7px;top:473px;width:930px;height:1px;background:#c0c0c0;"></div>
<div style="left:7px;top:501px;width:930px;height:1px;background:#c0c0c0;"></div>
<div style="left:7px;top:529px;width:930px;height:1px;background:#c0c0c0;"></div>
<div style="left:7px;top:557px;width:930px;height:1px;background:#c0c0c0;"></div>
<div style="left:7px;top:585px;width:930px;height:1px;background:#c0c0c0;"></div>
<div style="left:7px;top:613px;width:930px;height:1px;background:#c0c0c0;"></div>
<div style="left:7px;top:641px;width:930px;height:1px;background:#c0c0c0;"></div>
<div style="left:7px;top:669px;width:930px;height:1px;background:#c0c0c0;"></div>
<div style="left:7px;top:697px;width:930px;height:1px;background:#c0c0c0;"></div>
<div style="left:7px;top:725px;width:930px;height:1px;background:#c0c0c0;"></div>
<div style="left:7px;top:753px;width:930px;height:1px;background:#c0c0c0;"></div>
<div style="left:7px;top:781px;width:930px;height:1px;background:#c0c0c0;"></div>
</body></html>
